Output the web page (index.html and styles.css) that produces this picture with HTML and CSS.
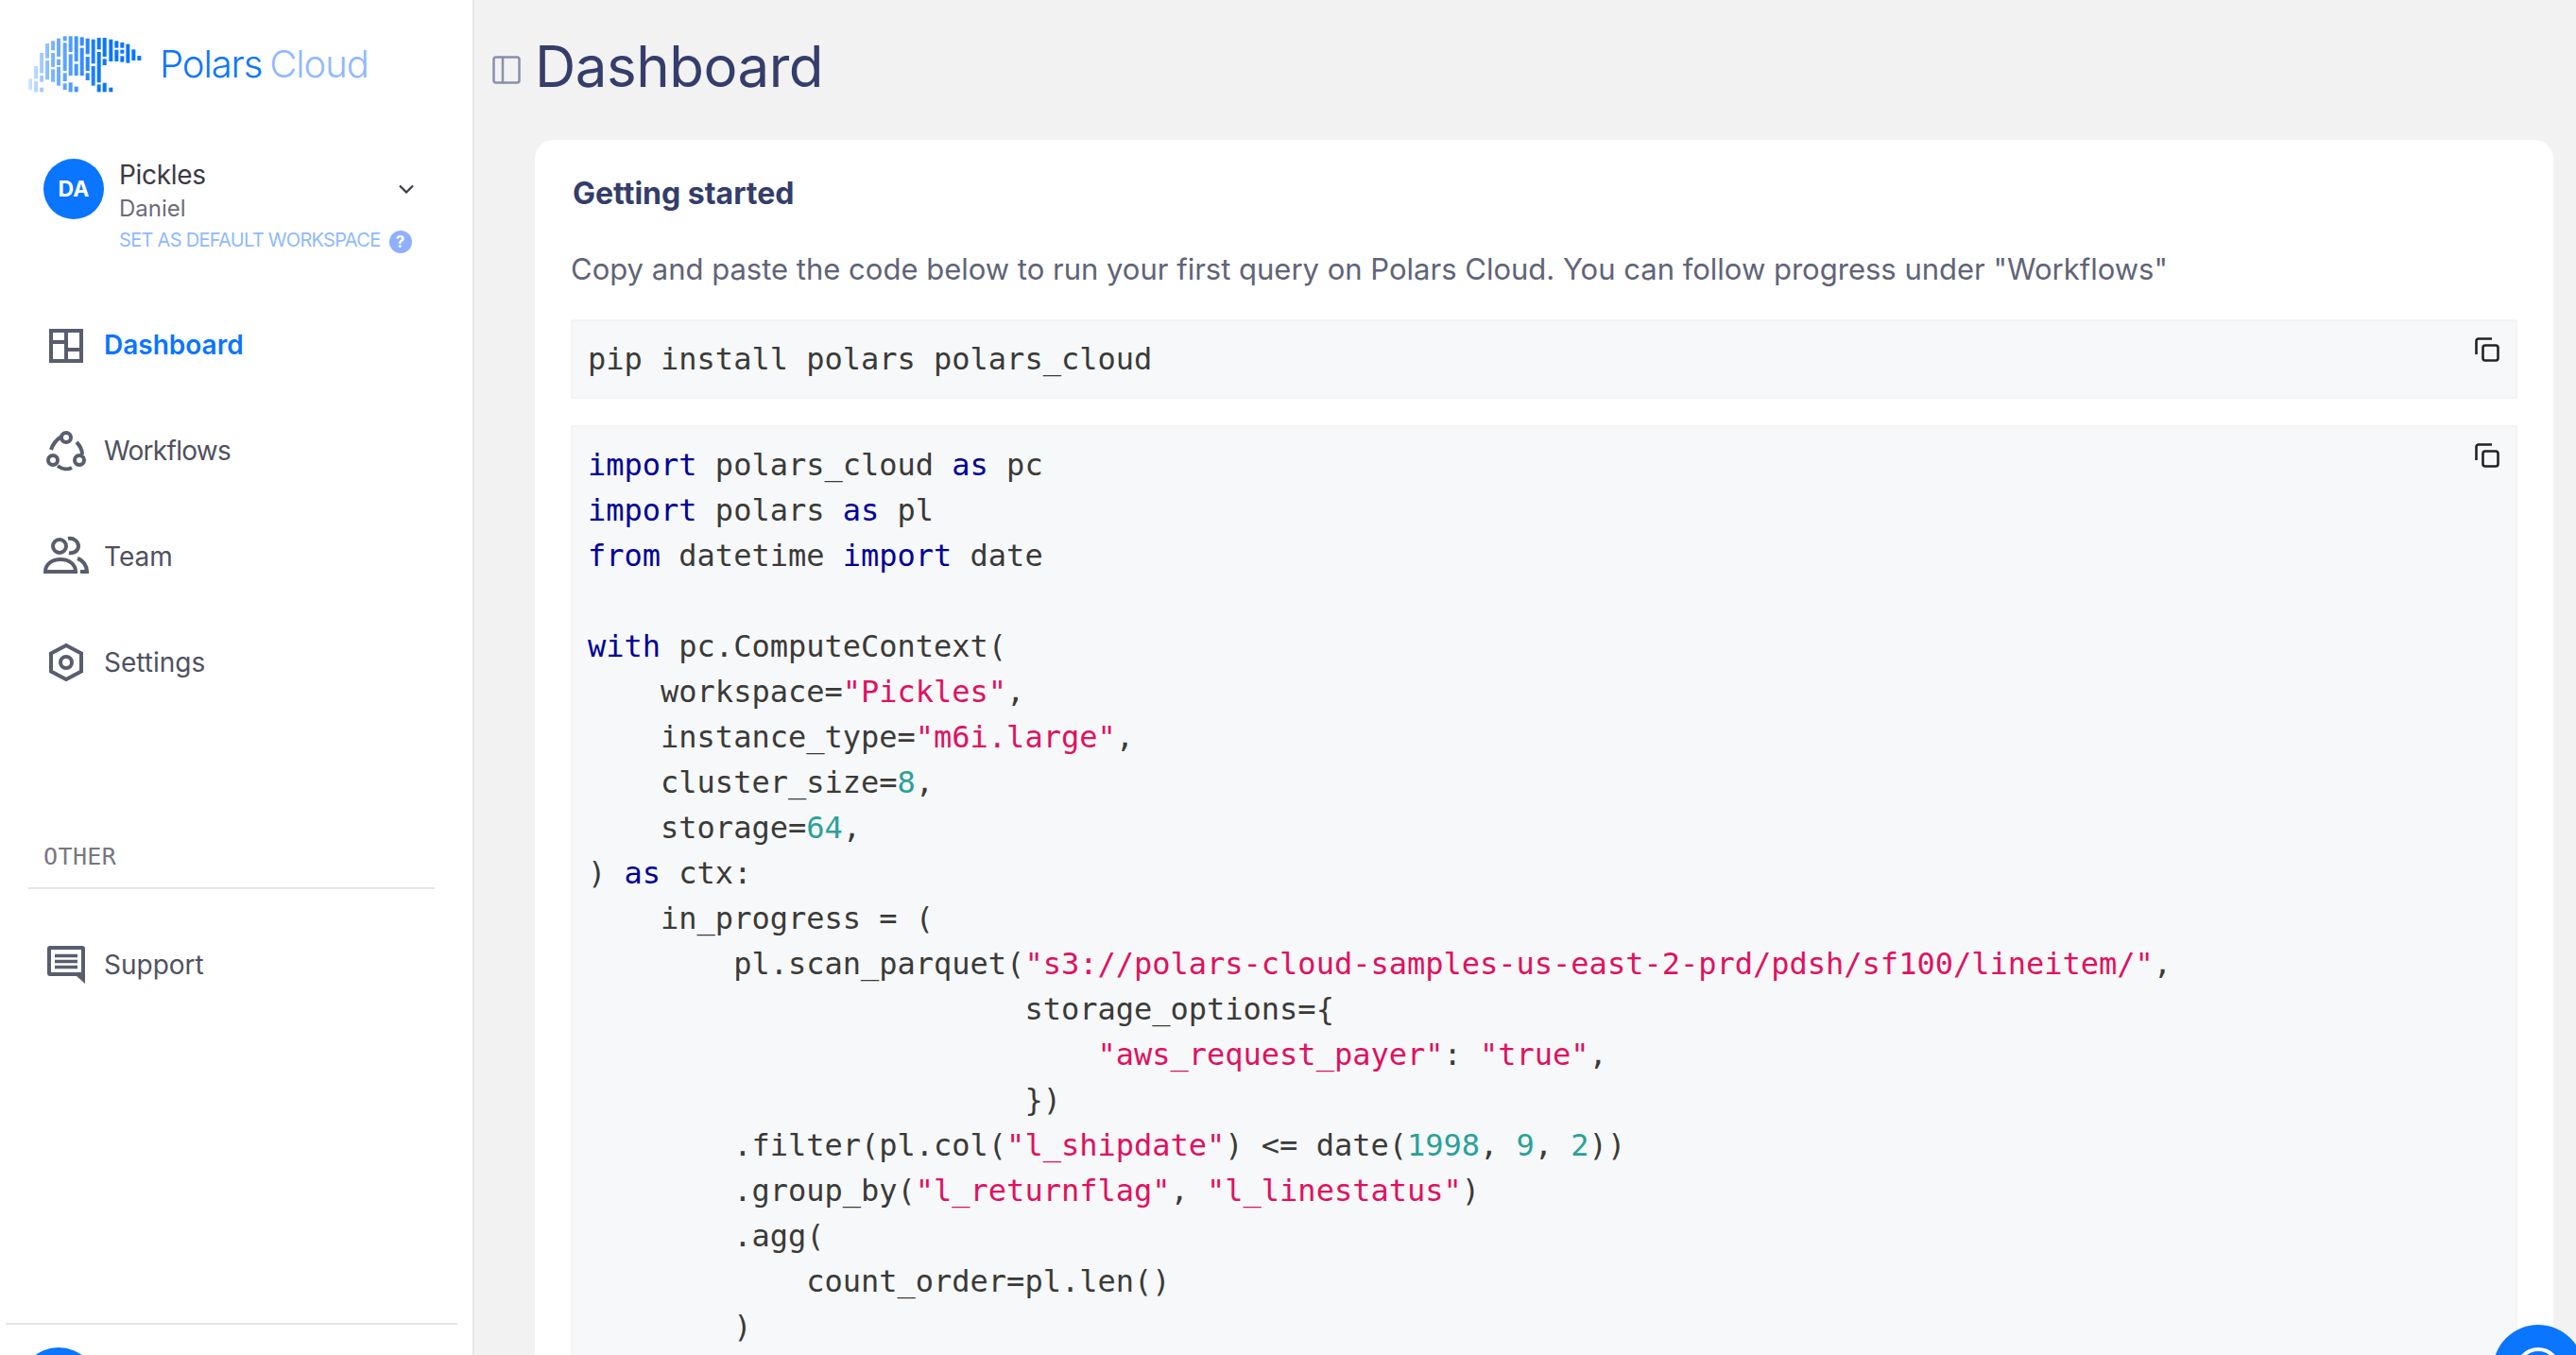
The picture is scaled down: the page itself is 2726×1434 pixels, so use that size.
FILE: index.html
```html
<!DOCTYPE html>
<html lang="en">
<head>
<meta charset="utf-8">
<title>Polars Cloud - Dashboard</title>
<link rel="stylesheet" href="styles.css">
</head>
<body>
<div class="app">
  <aside class="sidebar">
    <div class="brand">
      <svg class="brand-mark" viewBox="0 0 420 270">
        <defs>
          <linearGradient id="bear" gradientUnits="userSpaceOnUse" x1="30" y1="0" x2="260" y2="0">
            <stop offset="0" stop-color="#0a75ff" stop-opacity=".18"/>
            <stop offset=".35" stop-color="#0a75ff" stop-opacity=".55"/>
            <stop offset="1" stop-color="#0a75ff"/>
          </linearGradient>
        </defs>
        <g fill="url(#bear)">
          <rect x="30" y="190" width="12" height="35"/>
          <rect x="48" y="150" width="12" height="40"/><rect x="48" y="198" width="12" height="34"/>
          <rect x="66" y="108" width="12" height="64"/><rect x="66" y="180" width="12" height="20"/><rect x="66" y="218" width="12" height="14"/>
          <rect x="84" y="78" width="12" height="47"/><rect x="84" y="132" width="12" height="61"/>
          <rect x="102" y="70" width="12" height="30"/><rect x="102" y="108" width="12" height="45"/><rect x="102" y="160" width="12" height="40"/>
          <rect x="120" y="62" width="12" height="58"/><rect x="120" y="128" width="12" height="19"/><rect x="120" y="152" width="12" height="60"/>
          <rect x="140" y="55" width="12" height="15"/><rect x="140" y="76" width="12" height="89"/><rect x="140" y="172" width="12" height="26"/><rect x="140" y="205" width="12" height="20"/>
          <rect x="158" y="55" width="12" height="50"/><rect x="158" y="112" width="12" height="68"/><rect x="158" y="202" width="12" height="30"/>
          <rect x="176" y="55" width="12" height="80"/><rect x="176" y="143" width="12" height="37"/><rect x="176" y="215" width="12" height="17"/>
          <rect x="194" y="58" width="12" height="27"/><rect x="194" y="92" width="12" height="88"/>
          <rect x="212" y="62" width="12" height="50"/><rect x="212" y="120" width="12" height="45"/><rect x="212" y="172" width="12" height="23"/>
          <rect x="230" y="65" width="12" height="77"/><rect x="230" y="150" width="12" height="62"/>
          <rect x="248" y="60" width="12" height="37"/><rect x="248" y="105" width="12" height="97"/><rect x="248" y="208" width="12" height="24"/>
          <rect x="266" y="60" width="12" height="60"/><rect x="266" y="127" width="12" height="20"/><rect x="266" y="203" width="12" height="29"/>
          <rect x="286" y="65" width="12" height="70"/><rect x="286" y="218" width="12" height="14"/>
        </g>
        <g fill="#0a75ff">
          <rect x="304" y="70" width="12" height="22"/><rect x="304" y="98" width="12" height="37"/>
          <rect x="322" y="75" width="12" height="17"/><rect x="322" y="98" width="12" height="12"/><rect x="322" y="118" width="12" height="19"/>
          <rect x="340" y="80" width="12" height="60"/>
          <rect x="358" y="97" width="12" height="35"/>
          <rect x="376" y="117" width="12" height="15"/>
        </g>
      </svg>
      <div class="brand-name"><span class="brand-polars">Polars</span><span class="brand-cloud">Cloud</span></div>
    </div>

    <div class="workspace">
      <div class="avatar">DA</div>
      <div class="workspace-text">
        <div class="workspace-name">Pickles</div>
        <div class="workspace-user">Daniel</div>
        <div class="workspace-default">
          <span>SET AS DEFAULT WORKSPACE</span>
          <span class="help-dot">?</span>
        </div>
      </div>
      <svg class="chevron" viewBox="0 0 16 10"><path d="M1 1.500 8 8.500 15 1.500"/></svg>
    </div>

    <nav class="nav">
      <a class="nav-item active">
        <span class="nav-icon"><svg viewBox="0 0 48 48" width="48" height="48"><path class="ico" d="M8 9H40V41H8ZM24 9V41M8 21H24M24 29H40"/></svg></span>
        <span>Dashboard</span>
      </a>
      <a class="nav-item">
        <span class="nav-icon"><svg viewBox="0 0 48 48" width="48" height="48"><circle class="ico" cx="24" cy="10" r="5"/><circle class="ico" cx="10" cy="34" r="5"/><circle class="ico" cx="38" cy="34" r="5"/><path class="ico" d="M19 9C14 12 10 17 8 23M35 15C39 19 41 23 41 28M15 40C20 44 26 44 30 42"/></svg></span>
        <span class="tight">Workflows</span>
      </a>
      <a class="nav-item">
        <span class="nav-icon"><svg viewBox="0 0 48 48" width="48" height="48"><circle class="ico" cx="17" cy="13" r="7"/><path class="ico" d="M2 40C2 32 9 27 18 27C27 27 34 32 34 40ZM26 5C32 4 37 8 37 13C37 18 32 21 27 20M36 26C42 28 46 34 46 40H39"/></svg></span>
        <span>Team</span>
      </a>
      <a class="nav-item">
        <span class="nav-icon"><svg viewBox="0 0 48 48" width="48" height="48"><path class="ico" d="M24 6 40 14.500V33.500L24 42 8 33.500V14.500Z"/><circle class="ico" cx="24" cy="24" r="6"/></svg></span>
        <span>Settings</span>
      </a>
    </nav>

    <div class="section-label">OTHER</div>
    <div class="section-rule"></div>

    <nav class="nav">
      <a class="nav-item">
        <span class="nav-icon"><svg viewBox="0 0 48 48" width="48" height="48"><path class="ico" d="M7 6H41Q42 6 42 7V34H7Q6 34 6 33V7Q6 6 7 6Z"/><path class="ico-solid" d="M35 36H44V44Z"/><path class="ico-bars" d="M12 14.500H36M12 20.500H36M12 26.500H36"/></svg></span>
        <span>Support</span>
      </a>
    </nav>

    <div class="sidebar-foot"><div class="foot-avatar"></div></div>
  </aside>

  <main class="main">
    <header class="page-head">
      <svg class="panel-toggle" viewBox="0 0 30 30"><rect x="1.500" y="1.500" width="27" height="27" rx="2.500"/><path d="M11 1.500V28.500"/></svg>
      <h1 class="page-title">Dashboard</h1>
    </header>

    <section class="card">
      <h2 class="card-title">Getting started</h2>
      <p class="card-lead">Copy and paste the code below to run your first query on Polars Cloud. You can follow progress under "Workflows"</p>

      <div class="code-block">
        <svg class="copy" viewBox="0 0 26 26"><rect x="8.500" y="8.500" width="16" height="16" rx="2.500"/><path d="M18 1.500H4Q1.500 1.500 1.500 4V18"/></svg>
        <div class="code">
          <div class="line">pip install polars polars_cloud</div>
        </div>
      </div>

      <div class="code-block code-long">
        <svg class="copy" viewBox="0 0 26 26"><rect x="8.500" y="8.500" width="16" height="16" rx="2.500"/><path d="M18 1.500H4Q1.500 1.500 1.500 4V18"/></svg>
        <div class="code">
          <div class="line"><span class="k">import</span> polars_cloud <span class="k">as</span> pc</div>
          <div class="line"><span class="k">import</span> polars <span class="k">as</span> pl</div>
          <div class="line"><span class="k">from</span> datetime <span class="k">import</span> date</div>
          <div class="line"></div>
          <div class="line"><span class="k">with</span> pc.ComputeContext(</div>
          <div class="line">    workspace=<span class="s">"Pickles"</span>,</div>
          <div class="line">    instance_type=<span class="s">"m6i.large"</span>,</div>
          <div class="line">    cluster_size=<span class="n">8</span>,</div>
          <div class="line">    storage=<span class="n">64</span>,</div>
          <div class="line">) <span class="k">as</span> ctx:</div>
          <div class="line">    in_progress = (</div>
          <div class="line">        pl.scan_parquet(<span class="s">"s3://polars-cloud-samples-us-east-2-prd/pdsh/sf100/lineitem/"</span>,</div>
          <div class="line">                        storage_options={</div>
          <div class="line">                            <span class="s">"aws_request_payer"</span>: <span class="s">"true"</span>,</div>
          <div class="line">                        })</div>
          <div class="line">        .filter(pl.col(<span class="s">"l_shipdate"</span>) &lt;= date(<span class="n">1998</span>, <span class="n">9</span>, <span class="n">2</span>))</div>
          <div class="line">        .group_by(<span class="s">"l_returnflag"</span>, <span class="s">"l_linestatus"</span>)</div>
          <div class="line">        .agg(</div>
          <div class="line">            count_order=pl.len()</div>
          <div class="line">        )</div>
        </div>
      </div>
    </section>
  </main>
</div>

<button class="chat-fab" type="button" aria-label="Chat">
  <svg viewBox="0 0 48 48" width="48" height="48"><circle cx="24" cy="24" r="22"/></svg>
</button>
</body>
</html>
```
FILE: styles.css
```css
* { box-sizing: border-box; }
html, body { margin: 0; height: 100%; overflow: hidden; }
body {
  font-family: Inter, "Noto Sans", sans-serif;
  background: #f2f2f2;
  color: #3a3a42;
}
.app { display: flex; height: 1434px; }

/* sidebar */
.sidebar {
  width: 502px;
  flex: none;
  height: 100%;
  background: #fff;
  border-right: 2px solid #e6e6e6;
  display: flex;
  flex-direction: column;
  overflow: hidden;
}
.brand { display: flex; align-items: center; height: 90px; margin: 20px 0 0 20px; }
.brand-mark { width: 140px; height: 90px; flex: none; }
.brand-name {
  margin-left: 9px;
  margin-top: 5px;
  font-size: 40px;
  font-weight: 300;
  letter-spacing: -1.100px;
  white-space: nowrap;
}
.brand-polars { color: #0a75ff; margin-right: 8px; }
.brand-cloud { color: #8fb9ff; }

.workspace { display: flex; align-items: flex-start; margin: 58px 0 0 46px; position: relative; }
.avatar {
  width: 64px; height: 64px; border-radius: 50%;
  background: #0a75ff; color: #fff;
  display: flex; align-items: center; justify-content: center;
  font-size: 23px; font-weight: 700;
  flex: none;
}
.workspace-text { margin-left: 16px; }
.workspace-name { font-size: 28px; line-height: 36px; color: #3a3a42; letter-spacing: -.3px; margin-top: -1px; }
.workspace-user { font-size: 24px; line-height: 36px; color: #6b6c78; }
.workspace-default {
  display: flex; align-items: center; gap: 9px;
  font-size: 20px; line-height: 28px; color: #8fb9ff; letter-spacing: -.7px;
  white-space: nowrap;
  margin-top: 1px;
}
.help-dot {
  width: 24px; height: 24px; border-radius: 50%;
  background: #8fb0ff; color: #fff;
  font-size: 17px; font-weight: 700;
  display: flex; align-items: center; justify-content: center;
  margin-top: 3px;
  letter-spacing: 0;
}
.chevron {
  position: absolute; left: 376px; top: 27px;
  width: 16px; height: 10px;
  fill: none; stroke: #3a3a42; stroke-width: 2.200;
}

.nav { display: flex; flex-direction: column; }
.workspace + .nav { margin-top: 41px; }
.nav-item {
  height: 112px;
  display: flex; align-items: center;
  font-size: 28px; color: #4f5160;
  padding-left: 46px;
}
.nav-icon { width: 48px; height: 48px; flex: none; margin-right: 16px; }
.nav-icon svg { display: block; }
.ico { fill: none; stroke: #5a5d6e; stroke-width: 4; }
.ico-solid { fill: #5a5d6e; }
.ico-bars { fill: none; stroke: #5a5d6e; stroke-width: 3.500; }
.nav-item.active { color: #0a75ff; font-weight: 600; }
.tight { letter-spacing: -.7px; }

.section-label {
  margin: 133px 0 0 46px;
  font-family: "DejaVu Sans Mono", monospace;
  font-size: 25px; line-height: 34px;
  letter-spacing: .4px;
  color: #77777f;
}
.section-rule { height: 2px; background: #e5e5e5; margin: 15px 40px 24px 30px; }

.sidebar-foot {
  margin: auto 16px 0 6px;
  height: 34px;
  border-top: 2px solid #e5e5e5;
  padding: 24px 0 0 14px;
  overflow: hidden;
  flex: none;
}
.foot-avatar { width: 84px; height: 84px; border-radius: 50%; background: #0a75ff; }

/* main */
.main { flex: 1; min-width: 0; padding: 0 24px 0 64px; }
.page-head { position: relative; height: 148px; display: flex; align-items: flex-start; }
.panel-toggle {
  position: absolute; left: -45px; top: 59px;
  width: 30px; height: 30px;
  fill: none; stroke: #8a8fae; stroke-width: 2.500;
}
.page-title {
  margin: 30px 0 0;
  font-size: 60px; line-height: 80px; font-weight: 400;
  color: #343d6b;
  letter-spacing: -.5px;
}
.card {
  background: #fff;
  border-radius: 20px 20px 0 0;
  padding: 36px 38px 0;
  height: 1286px;
  overflow: hidden;
}
.card-title {
  margin: 0 0 0 2px;
  font-size: 32px; line-height: 42px; font-weight: 700;
  color: #343d6b;
}
.card-lead {
  margin: 38px 0 32px;
  font-size: 31px; line-height: 42px;
  color: #5f6478;
  white-space: nowrap;
}
.code-block {
  position: relative;
  background: #f7f8fa;
  border: 2px solid #f4f4f5;
  padding: 16px 16px;
  margin-bottom: 28px;
}
.code-long { padding-bottom: 120px; }
.code {
  font-family: "DejaVu Sans Mono", monospace;
  font-size: 32px; line-height: 48px;
  color: #3a3a38;
}
.line { white-space: pre; height: 48px; }
.copy {
  position: absolute; right: 17px; top: 17px;
  width: 26px; height: 26px;
  fill: none; stroke: #222; stroke-width: 2.600;
}
.k { color: #000099; }
.s { color: #e0115f; }
.n { color: #2aa198; }

.chat-fab {
  position: fixed; right: -8px; bottom: -64px;
  width: 96px; height: 96px; border-radius: 50%;
  background: #0a75ff; border: 0; padding: 24px;
  display: flex; align-items: center; justify-content: center;
}
.chat-fab svg { flex: none; fill: none; stroke: #fff; stroke-width: 4; }
```
